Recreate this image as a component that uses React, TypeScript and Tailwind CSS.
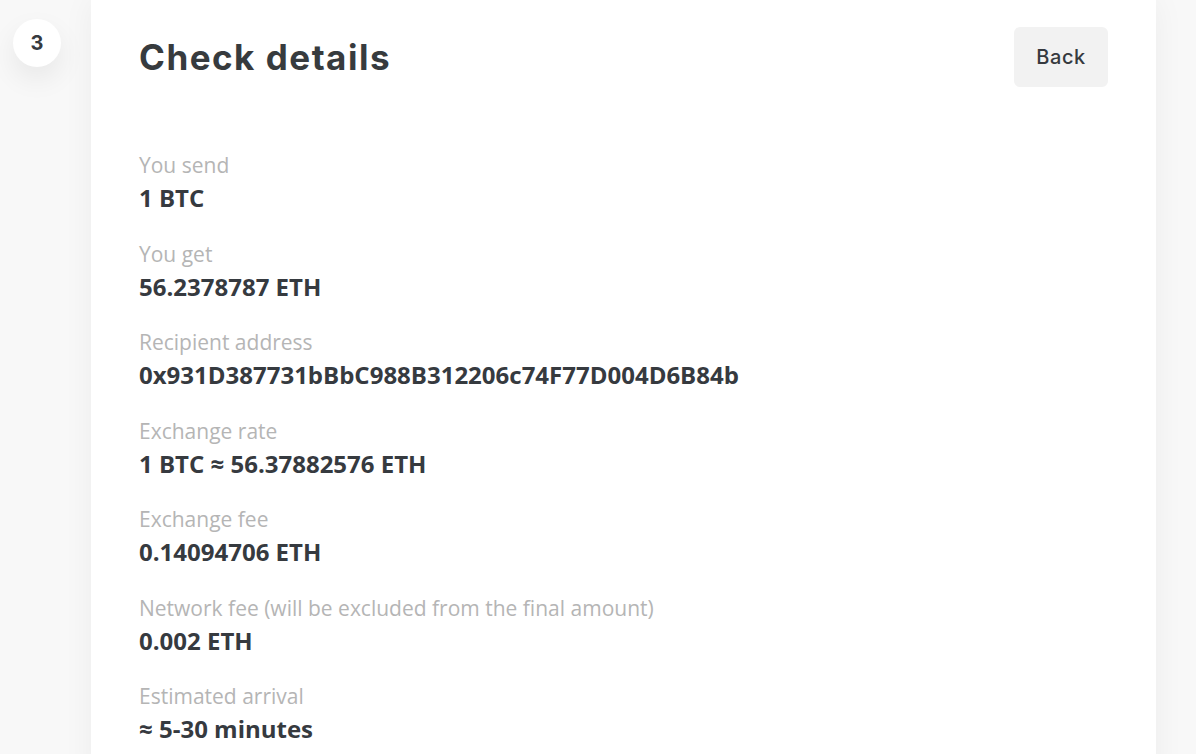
import React from "react";

const rows: { label: string; value: string }[] = [
  { label: "You send", value: "1 BTC" },
  { label: "You get", value: "56.2378787 ETH" },
  { label: "Recipient address", value: "0x931D387731bBbC988B312206c74F77D004D6B84b" },
  { label: "Exchange rate", value: "1 BTC ≈ 56.37882576 ETH" },
  { label: "Exchange fee", value: "0.14094706 ETH" },
  { label: "Network fee (will be excluded from the final amount)", value: "0.002 ETH" },
  { label: "Estimated arrival", value: "≈ 5-30 minutes" },
];

export default function App() {
  return (
    <div className="min-h-screen w-full bg-[#f8f8f8] overflow-hidden font-['Open_Sans',sans-serif]">
      <div className="flex">
        {/* step marker */}
        <div className="w-[91px] shrink-0 pt-[19px] pl-[13px]">
          <div className="w-12 h-12 rounded-full bg-white flex items-center justify-center shadow-[0_12px_28px_rgba(0,0,0,0.07)] text-[#363a3f] text-[20px] font-bold font-['Inter',sans-serif]">
            3
          </div>
        </div>

        {/* card */}
        <div className="w-[1065px] shrink-0 bg-white shadow-[0_0_30px_rgba(0,0,0,0.05)] px-12 pt-[27px] pb-10 min-h-screen">
          <div className="flex items-center justify-between h-[60px]">
            <h1 className="text-[35px] leading-none font-bold text-[#373b3e] tracking-[1.5px] font-['Inter',sans-serif]">
              Check details
            </h1>
            <button className="w-[94px] h-[60px] rounded-md bg-[#f2f2f2] text-[#363a3f] text-[20px] font-medium tracking-[0.6px] font-['Inter',sans-serif]">
              Back
            </button>
          </div>

          <div className="mt-[64px] flex flex-col gap-[25.5px]">
            {rows.map((r) => (
              <div key={r.label}>
                <div className="text-[21px] leading-[28px] text-[#b5b5b5]">{r.label}</div>
                <div className="mt-[3px] text-[24px] leading-[32px] font-bold text-[#363a3f]">{r.value}</div>
              </div>
            ))}
          </div>
        </div>
      </div>
    </div>
  );
}
